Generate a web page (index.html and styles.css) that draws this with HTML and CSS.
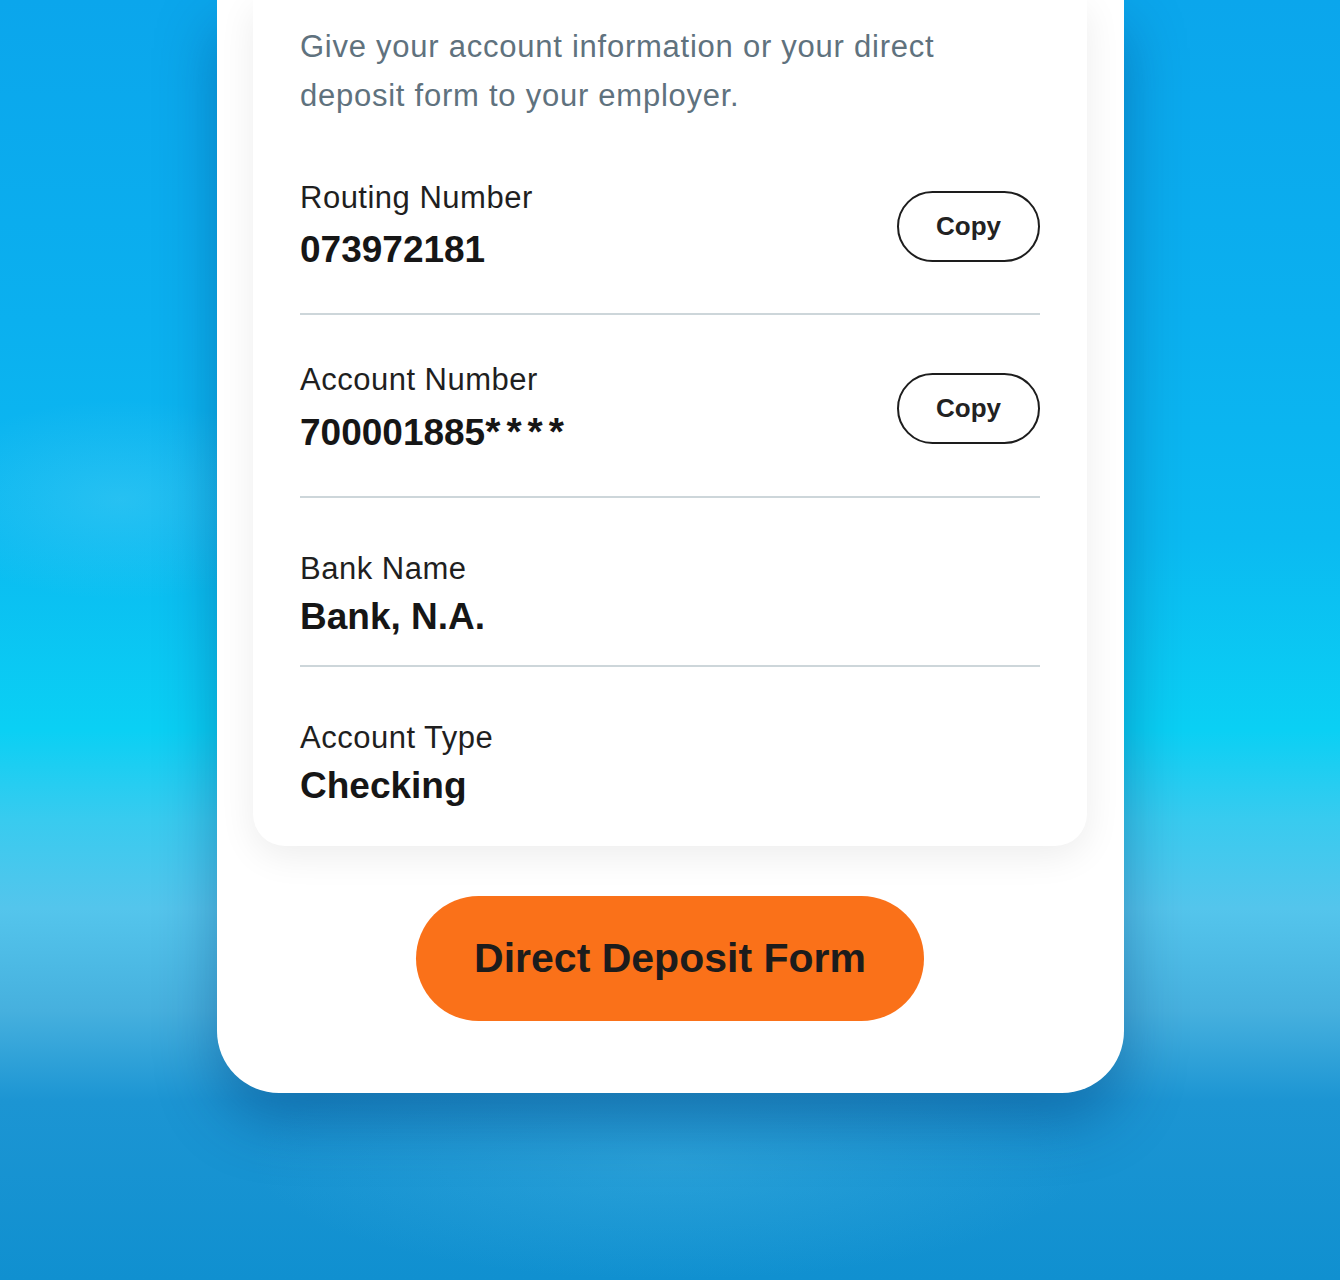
FILE: index.html
```html
<!DOCTYPE html>
<html lang="en">
<head>
<meta charset="utf-8">
<title>Direct Deposit</title>
<link rel="stylesheet" href="styles.css">
</head>
<body>
<main class="stage">
  <section class="phone">
    <div class="card">
      <p class="intro">Give your account information or your direct deposit form to your employer.</p>

      <div class="row row--copy">
        <div class="field">
          <div class="label">Routing Number</div>
          <div class="value">073972181</div>
        </div>
        <button class="copy" type="button">Copy</button>
      </div>

      <div class="row row--copy">
        <div class="field">
          <div class="label">Account Number</div>
          <div class="value">700001885<span class="mask">****</span></div>
        </div>
        <button class="copy" type="button">Copy</button>
      </div>

      <div class="row row--plain">
        <div class="field">
          <div class="label">Bank Name</div>
          <div class="value">Bank, N.A.</div>
        </div>
      </div>

      <div class="row row--plain row--last">
        <div class="field">
          <div class="label">Account Type</div>
          <div class="value">Checking</div>
        </div>
      </div>
    </div>

    <button class="cta" type="button">Direct Deposit Form</button>
  </section>
</main>
</body>
</html>
```

FILE: styles.css
```css
* { box-sizing: border-box; }

html, body {
  margin: 0;
  padding: 0;
}

body {
  min-height: 1280px;
  font-family: "Liberation Sans", Arial, sans-serif;
  background:
    radial-gradient(ellipse 200px 100px at 120px 500px, rgba(110, 215, 245, 0.28), rgba(110, 215, 245, 0)),
    radial-gradient(ellipse 420px 120px at 670px 1160px, rgba(80, 190, 230, 0.3), rgba(80, 190, 230, 0)),
    linear-gradient(to bottom,
      #0ba6ec 0%,
      #0bb0ef 25%,
      #0bbaf1 42%,
      #0ad0f4 57%,
      #38cbef 64%,
      #54c5ec 71%,
      #46b0de 79%,
      #1c95d3 86%,
      #1090d0 100%);
}

.stage {
  display: flex;
  justify-content: center;
}

.phone {
  width: 907px;
  background: #ffffff;
  border-radius: 0 0 62px 62px;
  padding: 0 37px 72px;
  display: flex;
  flex-direction: column;
  align-items: center;
  box-shadow: 0 28px 60px rgba(0, 50, 110, 0.38);
}

.card {
  width: 834px;
  background: #ffffff;
  border-radius: 0 0 32px 32px;
  padding: 22px 47px 0;
  box-shadow: 0 10px 36px rgba(0, 0, 0, 0.075);
}

.intro {
  margin: 0 0 15px;
  max-width: 680px;
  font-size: 31px;
  line-height: 49px;
  letter-spacing: 0.75px;
  color: #5f727e;
}

.row {
  display: flex;
  align-items: center;
  justify-content: space-between;
  border-bottom: 2px solid #cdd6da;
}

.row--copy {
  padding: 45px 0 41px;
}

.row--copy + .row--copy {
  padding: 47px 0 41px;
}

.row--plain {
  padding: 53px 0 26px;
}

.row--last {
  border-bottom: none;
  padding-bottom: 38px;
}

.field {
  display: flex;
  flex-direction: column;
  gap: 12px;
}

.row--plain .field {
  gap: 8px;
}

.label {
  font-size: 31px;
  line-height: 36px;
  letter-spacing: 0.5px;
  color: #1f1f1f;
}

.value {
  font-size: 37px;
  line-height: 44px;
  font-weight: 700;
  color: #161616;
}

.mask {
  letter-spacing: 6px;
  font-size: 39px;
}

.copy {
  width: 143px;
  height: 71px;
  border: 2px solid #1d1d1d;
  border-radius: 36px;
  background: #ffffff;
  font-family: "Liberation Sans", Arial, sans-serif;
  font-size: 26px;
  font-weight: 700;
  color: #222222;
  padding: 0;
}

.cta {
  margin-top: 50px;
  width: 508px;
  height: 125px;
  border: none;
  border-radius: 63px;
  background: #fa7119;
  font-family: "Liberation Sans", Arial, sans-serif;
  font-size: 41px;
  font-weight: 700;
  color: #1c1c1c;
  padding: 0;
}
```
